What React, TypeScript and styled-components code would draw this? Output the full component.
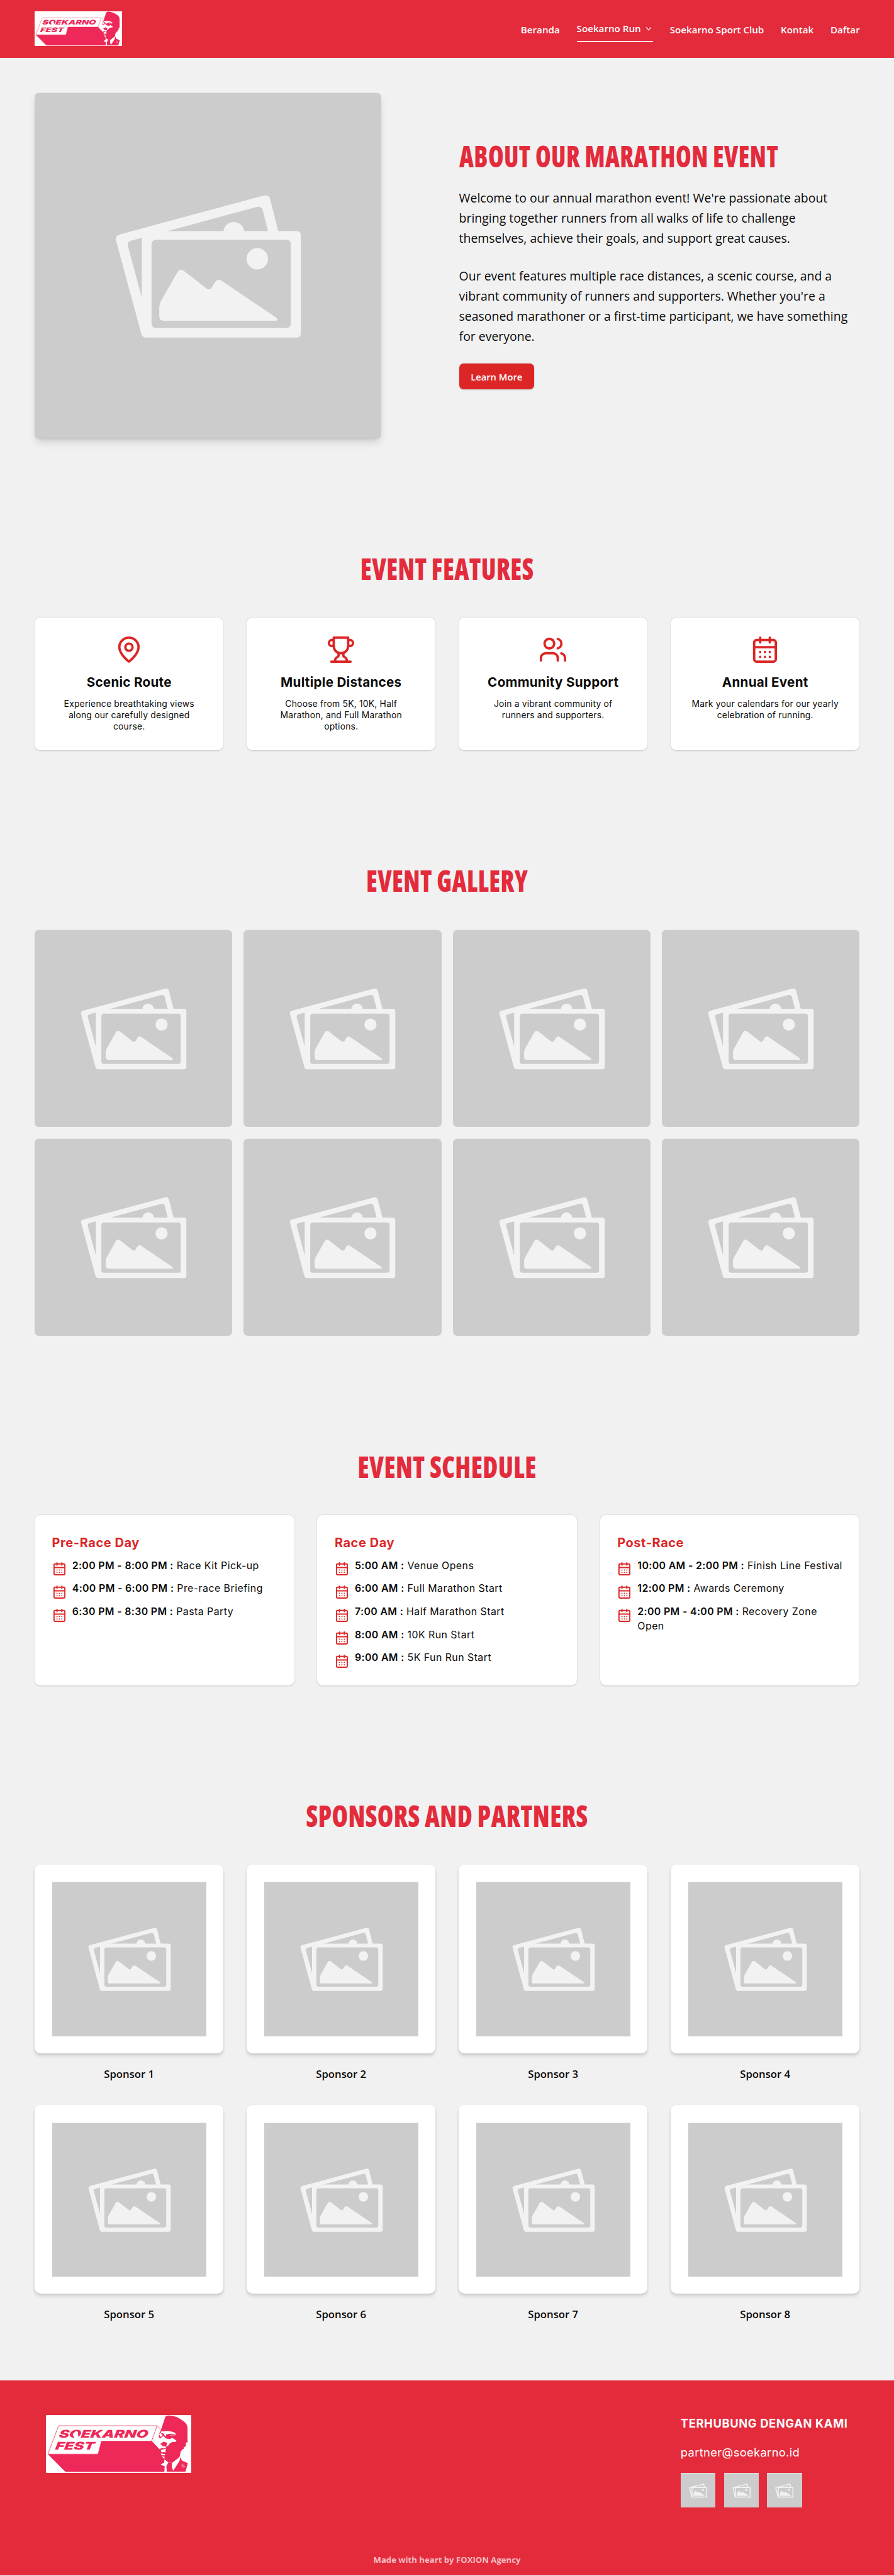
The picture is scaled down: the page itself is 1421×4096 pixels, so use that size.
import React from "react";
import styled, { createGlobalStyle, css } from "styled-components";

/* 1rem is ten design pixels; the root size scales the whole page. */
const GlobalStyle = createGlobalStyle`
  html { font-size: 7.648px; background: #f1f1f1; }
  body { margin: 0; background: #f1f1f1; color: #0a0a0a; font-family: "Open Sans", "Noto Sans", sans-serif; }
  *, *::before, *::after { box-sizing: border-box; }
  h1, h2, h3, p, ul, figure { margin: 0; padding: 0; }
  ul { list-style: none; }
  a { color: inherit; text-decoration: none; }
`;

const geometric = css`
  font-family: Inter, "Open Sans", sans-serif;
`;

/* ---------- artwork ---------- */

const Logo = styled.svg<{ $height: number }>`
  display: block;
  height: ${(p) => p.$height}rem;
  width: ${(p) => (p.$height * 906) / 360}rem;
  background: #fff;
`;

function BrandLogo({ height }: { height: number }) {
  const pink = "#ee2858";
  return (
    <Logo $height={height} viewBox="18 30 906 360" preserveAspectRatio="none">
      <path d="M30 274 H343 L364 193 H677 L727 246 L760 312 L758 385 H140Z" fill={pink} />
      <path d="M97 97 H711 L677 193 H364 L343 274 H30Z" fill="#fff" stroke={pink} strokeWidth="3" />
      <path d="M711 97 L736 122 M677 193 L727 246" stroke={pink} strokeWidth="3" fill="none" />
      <path
        d="M733 130 L762 43 Q767 32 785 33 Q835 36 868 63 Q901 82 901 112 V190 Q906 204 898 218 L882 238 L870 244 Q858 256 856 268 Q854 296 838 303 L806 328 L778 324 L757 308 L740 288 L738 276 L726 262 L724 244 L738 224 L732 208 L750 196 L722 168 L724 146Z"
        fill={pink}
      />
      <path d="M736 133 Q790 124 824 142 L829 155 Q806 143 786 148 L768 152 L764 166 L748 143 L734 142Z" fill="#fff" />
      <path d="M722 150 L734 142 L746 160 L734 166Z M734 172 L752 160 L764 176 L790 180 L806 172 L832 190 L824 199 L808 198 L790 208 L780 222 L768 226 L774 204 L752 196 L736 208 L726 190Z" fill="#fff" />
      <path d="M724 226 L736 214 L746 224 L770 228 L762 238 L740 236 L726 244Z M734 248 L768 240 L762 256 L768 262 L738 262Z M734 270 L762 274 L758 282 L738 280Z M738 288 L758 290 L757 304Z" fill="#fff" />
      <path d="M792 158 Q806 150 820 158" stroke="#fff" strokeWidth="3" fill="none" />
      <path d="M901 196 L890 206 L892 222 L878 232 L882 240 L904 222Z" fill="#fff" />
      <path d="M855 292 L866 314 L903 330 L888 384 H770 L768 350 L782 324 L806 328 L804 352 L812 376 L850 318Z" fill={pink} />
      <path d="M757 308 L780 325 L768 350 L771 385 H757 L759 350 L733 340 L755 326Z M806 328 L855 292 L850 314 L811 377 L803 352Z" fill="#fff" />
      <path d="M872 336 A10 10 0 1 0 885 348" stroke="#fff" strokeWidth="3" fill="none" />
      <circle cx="877" cy="344" r="3" fill="#fff" />
      <g fill={pink} fontFamily="Inter, sans-serif" fontSize="66" fontStyle="italic" fontWeight="900">
        <text transform="translate(97 170) skewX(-8)" textLength="556" lengthAdjust="spacingAndGlyphs">
          SOEKARNO
        </text>
        <text transform="translate(75 245) skewX(-8)" textLength="244" lengthAdjust="spacingAndGlyphs">
          FEST
        </text>
      </g>
      <path d="M198 136 Q206 128 216 134 L216 150 L221 158 L214 172 H196 L190 160 L196 152Z" fill="#fff" />
    </Logo>
  );
}

const Picture = styled.figure<{ $radius?: number; $shadow?: boolean }>`
  width: 100%;
  aspect-ratio: 1;
  overflow: hidden;
  background: #ccc;
  border-top: 1px solid #e6e6e6;
  border-radius: ${(p) => p.$radius ?? 0}rem;
  box-shadow: ${(p) => (p.$shadow ? "0 1.1rem 1.7rem -0.3rem rgba(0,0,0,.12), 0 .45rem .7rem -0.4rem rgba(0,0,0,.12)" : "none")};

  svg { display: block; width: 100%; height: 100%; }
`;

function Placeholder(props: { radius?: number; shadow?: boolean }) {
  return (
    <Picture $radius={props.radius} $shadow={props.shadow}>
      <svg viewBox="25 26 1485 1485" fill="#f2f2f2">
        <path
          fillRule="evenodd"
          d="M373 658 Q369 639 390 633 L1010 466 Q1029 463 1034 478 L1070 619 H1150 Q1166 620 1167 636 V1060 Q1166 1075 1150 1076 H498 Q486 1074 482 1060Z M594 619 L978 515 Q997 512 1003 528 L1026 619Z M484 648 L437 660 Q420 666 424 682 L484 905Z M542 656 H1108 Q1123 658 1124 674 V1017 Q1122 1033 1108 1035 H542 Q528 1033 526 1017 V674 Q528 658 542 656Z"
        />
        <path d="M835 622 A44 42 0 0 1 923 622Z" />
        <circle cx="980" cy="738" r="46" />
        <path d="M559 945 Q560 930 568 916 L637 795 Q648 778 664 789 L758 862 Q772 876 784 862 L797 840 Q809 822 825 831 L1060 990 Q1072 998 1062 1004 H577 Q560 1003 559 986Z" />
      </svg>
    </Picture>
  );
}

const Icon = styled.svg.attrs({ viewBox: "0 0 24 24" })<{ $size: number }>`
  display: block;
  flex: none;
  width: ${(p) => p.$size}rem;
  height: ${(p) => p.$size}rem;
  fill: none;
  stroke: #dc2626;
  stroke-width: 2;
  stroke-linecap: round;
  stroke-linejoin: round;
`;

const PinIcon = () => (
  <Icon $size={6}>
    <path d="M20 10c0 6-8 12-8 12s-8-6-8-12a8 8 0 0 1 16 0Z" />
    <circle cx="12" cy="10" r="3" />
  </Icon>
);
const TrophyIcon = () => (
  <Icon $size={6}>
    <path d="M6 9H4.5a2.5 2.5 0 0 1 0-5H6M18 9h1.5a2.5 2.5 0 0 0 0-5H18M4 22h16" />
    <path d="M10 14.66V17c0 .55-.47.98-.97 1.21C7.85 18.75 7 20.24 7 22M14 14.66V17c0 .55.47.98.97 1.21C16.15 18.75 17 20.24 17 22" />
    <path d="M18 2H6v7a6 6 0 0 0 12 0V2Z" />
  </Icon>
);
const UsersIcon = () => (
  <Icon $size={6}>
    <path d="M16 21v-2a4 4 0 0 0-4-4H6a4 4 0 0 0-4 4v2" />
    <circle cx="9" cy="7" r="4" />
    <path d="M22 21v-2a4 4 0 0 0-3-3.87M16 3.13a4 4 0 0 1 0 7.75" />
  </Icon>
);
const CalendarIcon = ({ size = 6 }: { size?: number }) => (
  <Icon $size={size}>
    <rect x="3" y="4" width="18" height="18" rx="2" />
    <path d="M8 2v4M16 2v4M3 10h18M8 14h.01M12 14h.01M16 14h.01M8 18h.01M12 18h.01M16 18h.01" />
  </Icon>
);

/* ---------- header ---------- */

const Header = styled.header`
  display: flex;
  align-items: center;
  justify-content: space-between;
  height: 12rem;
  padding: 0 7.1rem 0 7.2rem;
  background: #e32b3c;
`;

const Nav = styled.nav`
  display: flex;
  gap: 3.5rem;
  height: 5.4rem;
  color: #fff;
  font-size: 1.985rem;
  font-weight: 600;
  line-height: 3rem;
  white-space: nowrap;
`;

const NavLink = styled.a<{ $active?: boolean }>`
  display: flex;
  align-items: flex-start;
  gap: 0.9rem;
  padding-top: ${(p) => (p.$active ? 1.2 : 1.35)}rem;
  padding-right: ${(p) => (p.$active ? 0.3 : 0)}rem;
  border-bottom: 0.3rem solid ${(p) => (p.$active ? "#fff" : "transparent")};
`;

const Chevron = styled.svg`
  width: 1.3rem;
  height: 1.3rem;
  margin-top: 0.9rem;
  fill: none;
  stroke: #fff;
  stroke-width: 1.6;
`;

/* ---------- sections ---------- */

const Section = styled.section`
  padding: 24rem 7.15rem 0 7.2rem;
`;

const Title = styled.h2<{ $squeeze: number; $align?: "left" | "center" }>`
  color: #e32b3c;
  font-family: "Open Sans", sans-serif;
  font-size: 6.16rem;
  font-stretch: 75%;
  font-weight: 800;
  letter-spacing: 0.06rem;
  line-height: 6.2rem;
  margin-bottom: -0.2rem;
  text-align: ${(p) => p.$align ?? "center"};
  text-transform: uppercase;
  white-space: nowrap;
  transform: scaleX(${(p) => p.$squeeze});
  transform-origin: ${(p) => p.$align ?? "center"} center;
`;

const Grid = styled.div<{ $cols: number; $gap: number }>`
  display: grid;
  grid-template-columns: repeat(${(p) => p.$cols}, minmax(0, 1fr));
  gap: ${(p) => p.$gap}rem;
  margin-top: 7.2rem;
`;

const GalleryGrid = styled(Grid)`
  padding-bottom: 0.12rem;
`;

const About = styled.section`
  display: grid;
  grid-template-columns: 72rem 1fr;
  gap: 16.2rem;
  align-items: center;
  padding: 7.2rem 7.15rem 0 7.2rem;
`;

const AboutText = styled.div`
  display: flex;
  flex-direction: column;
  align-items: flex-start;
  gap: 3.6rem;
`;

const Paragraph = styled.p`
  padding-top: 0.1rem;
  margin-bottom: -0.1rem;
  font-size: 2.543rem;
  line-height: 4.2rem;
  white-space: nowrap;
`;

const Button = styled.a`
  display: flex;
  align-items: center;
  justify-content: center;
  width: 15.6rem;
  height: 5.4rem;
  border-radius: 0.9rem;
  background: #dc2626;
  box-shadow: 0 0.1rem 0.3rem rgba(0, 0, 0, 0.2);
  color: #fff;
  font-size: 1.93rem;
  font-weight: 600;
`;

const Card = styled.article`
  border-radius: 1.2rem;
  background: #fff;
  box-shadow: 0 0.1rem 0.35rem rgba(0, 0, 0, 0.12), 0 0.1rem 0.2rem rgba(0, 0, 0, 0.08);
`;

const FeatureCard = styled(Card)`
  ${geometric}
  display: flex;
  flex-direction: column;
  align-items: center;
  height: 27.6rem;
  padding-top: 3.6rem;
  text-align: center;
  white-space: nowrap;

  h3 {
    margin-top: 2.1rem;
    font-size: 2.7rem;
    font-weight: 700;
    letter-spacing: 0.036rem;
    line-height: 3.6rem;
  }
  p {
    margin-top: 1.4rem;
    font-size: 1.82rem;
    letter-spacing: 0.024rem;
    line-height: 2.4rem;
  }
`;

const DayCard = styled(Card)`
  ${geometric}
  min-height: 35.43rem;
  padding: 4rem 3.6rem 0;

  h3 {
    margin-bottom: 1.45rem;
    color: #dc2626;
    font-size: 2.6rem;
    font-weight: 700;
    letter-spacing: 0.08rem;
    line-height: 3.6rem;
  }
`;

const Slot = styled.li`
  display: flex;
  gap: 1.2rem;
  margin-bottom: 1.8rem;
  font-size: 2.08rem;
  letter-spacing: 0.06rem;
  line-height: 3rem;
  white-space: nowrap;

  svg { margin-top: 0.6rem; margin-bottom: -0.6rem; }
  b { font-weight: 600; letter-spacing: 0.045rem; line-height: 1; }
`;

const SponsorCard = styled(Card)`
  padding: 3.6rem;
  box-shadow: 0 0.6rem 0.9rem -0.2rem rgba(0, 0, 0, 0.12), 0 0.2rem 0.5rem -0.1rem rgba(0, 0, 0, 0.1);
`;

const SponsorName = styled.p`
  margin-top: 2.7rem;
  font-size: 2.19rem;
  font-weight: 600;
  line-height: 3.2rem;
  text-align: center;
`;

/* ---------- footer ---------- */

const Footer = styled.footer`
  display: flex;
  flex-direction: column;
  height: 40.55rem;
  margin-top: 12.1rem;
  padding-top: 7.2rem;
  background: #e32b3c;
  color: #fff;
`;

const FooterTop = styled.div`
  display: flex;
  justify-content: space-between;
  height: 28.7rem;
  padding: 0 9.55rem 0 9.6rem;
`;

const Contact = styled.div`
  ${geometric}
  width: 34.8rem;
  white-space: nowrap;

  h3 { font-size: 2.4rem; font-weight: 700; letter-spacing: 0.08rem; line-height: 3.5rem; }
  p { margin: 2.45rem 0; font-size: 2.4rem; letter-spacing: 0.045rem; line-height: 3.6rem; }
`;

const Socials = styled.div`
  display: grid;
  grid-template-columns: repeat(3, 7.2rem);
  gap: 1.8rem;
`;

const Credit = styled.p`
  color: rgba(255, 255, 255, 0.7);
  font-size: 1.72rem;
  font-weight: 700;
  line-height: 2.7rem;
  text-align: center;
`;

/* ---------- content ---------- */

const features = [
  { icon: <PinIcon />, title: "Scenic Route", lines: ["Experience breathtaking views", "along our carefully designed", "course."] },
  { icon: <TrophyIcon />, title: "Multiple Distances", lines: ["Choose from 5K, 10K, Half", "Marathon, and Full Marathon", "options."] },
  { icon: <UsersIcon />, title: "Community Support", lines: ["Join a vibrant community of", "runners and supporters."] },
  { icon: <CalendarIcon />, title: "Annual Event", lines: ["Mark your calendars for our yearly", "celebration of running."] },
];

const days: { title: string; slots: [string, string[]][] }[] = [
  {
    title: "Pre-Race Day",
    slots: [
      ["2:00 PM - 8:00 PM", ["Race Kit Pick-up"]],
      ["4:00 PM - 6:00 PM", ["Pre-race Briefing"]],
      ["6:30 PM - 8:30 PM", ["Pasta Party"]],
    ],
  },
  {
    title: "Race Day",
    slots: [
      ["5:00 AM", ["Venue Opens"]],
      ["6:00 AM", ["Full Marathon Start"]],
      ["7:00 AM", ["Half Marathon Start"]],
      ["8:00 AM", ["10K Run Start"]],
      ["9:00 AM", ["5K Fun Run Start"]],
    ],
  },
  {
    title: "Post-Race",
    slots: [
      ["10:00 AM - 2:00 PM", ["Finish Line Festival"]],
      ["12:00 PM", ["Awards Ceremony"]],
      ["2:00 PM - 4:00 PM", ["Recovery Zone", "Open"]],
    ],
  },
];

const eight = [1, 2, 3, 4, 5, 6, 7, 8];

const Lines = ({ of }: { of: string[] }) => (
  <>
    {of.map((line, i) => (
      <React.Fragment key={line}>
        {i > 0 && <br />}
        {line}
      </React.Fragment>
    ))}
  </>
);

export default function App() {
  return (
    <>
      <GlobalStyle />
      <Header>
        <BrandLogo height={7.2} />
        <Nav>
          <NavLink href="#">Beranda</NavLink>
          <NavLink href="#" $active>
            Soekarno Run
            <Chevron viewBox="0 0 13 13">
              <path d="M1.5 3 L6.5 9 L11.5 3" />
            </Chevron>
          </NavLink>
          <NavLink href="#">Soekarno Sport Club</NavLink>
          <NavLink href="#">Kontak</NavLink>
          <NavLink href="#">Daftar</NavLink>
        </Nav>
      </Header>

      <main>
        <About>
          <Placeholder radius={0.9} shadow />
          <AboutText>
            <Title as="h1" $align="left" $squeeze={0.846}>About Our Marathon Event</Title>
            <Paragraph>
              <Lines
                of={[
                  "Welcome to our annual marathon event! We're passionate about",
                  "bringing together runners from all walks of life to challenge",
                  "themselves, achieve their goals, and support great causes.",
                ]}
              />
            </Paragraph>
            <Paragraph>
              <Lines
                of={[
                  "Our event features multiple race distances, a scenic course, and a",
                  "vibrant community of runners and supporters. Whether you're a",
                  "seasoned marathoner or a first-time participant, we have something",
                  "for everyone.",
                ]}
              />
            </Paragraph>
            <Button href="#">Learn More</Button>
          </AboutText>
        </About>

        <Section>
          <Title $squeeze={0.858}>Event Features</Title>
          <Grid $cols={4} $gap={4.8}>
            {features.map((f) => (
              <FeatureCard key={f.title}>
                {f.icon}
                <h3>{f.title}</h3>
                <p>
                  <Lines of={f.lines} />
                </p>
              </FeatureCard>
            ))}
          </Grid>
        </Section>

        <Section>
          <Title $squeeze={0.853}>Event Gallery</Title>
          <GalleryGrid $cols={4} $gap={2.4}>
            {eight.map((n) => (
              <Placeholder key={n} radius={0.9} />
            ))}
          </GalleryGrid>
        </Section>

        <Section>
          <Title $squeeze={0.87}>Event Schedule</Title>
          <Grid $cols={3} $gap={4.8}>
            {days.map((d) => (
              <DayCard key={d.title}>
                <h3>{d.title}</h3>
                <ul>
                  {d.slots.map(([time, what]) => (
                    <Slot key={time}>
                      <CalendarIcon size={3} />
                      <span>
                        <b>{time} :</b> <Lines of={what} />
                      </span>
                    </Slot>
                  ))}
                </ul>
              </DayCard>
            ))}
          </Grid>
        </Section>

        <Section>
          <Title $squeeze={0.873}>Sponsors and Partners</Title>
          <Grid $cols={4} $gap={4.8}>
            {eight.map((n) => (
              <div key={n}>
                <SponsorCard>
                  <Placeholder />
                </SponsorCard>
                <SponsorName>Sponsor {n}</SponsorName>
              </div>
            ))}
          </Grid>
        </Section>
      </main>

      <Footer>
        <FooterTop>
          <BrandLogo height={12} />
          <Contact>
            <h3>TERHUBUNG DENGAN KAMI</h3>
            <p>partner@soekarno.id</p>
            <Socials>
              <Placeholder />
              <Placeholder />
              <Placeholder />
            </Socials>
          </Contact>
        </FooterTop>
        <Credit>Made with heart by FOXION Agency</Credit>
      </Footer>
    </>
  );
}
